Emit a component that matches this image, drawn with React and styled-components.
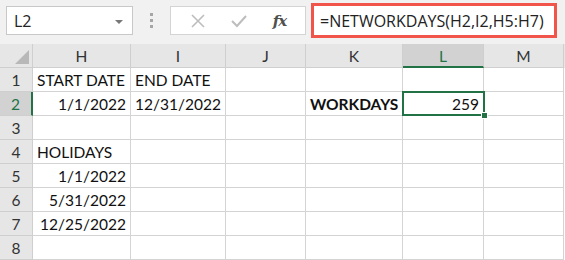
import React from 'react';
import styled, { createGlobalStyle } from 'styled-components';

const GlobalStyle = createGlobalStyle`
    html, body {
        margin: 0;
        padding: 0;
        background: #ffffff;
    }
`

const Page = styled.div`
    width: 565px;
    height: 260px;
    overflow: hidden;
    background: #ffffff;
    display: flex;
    flex-direction: column;
`

const FormulaBar = styled.div`
    height: 47px;
    padding-bottom: 3px;
    background: #f1f1f1;
    display: flex;
    align-items: center;
    padding-left: 6px;
`

const NameBox = styled.div`
    width: 127px;
    height: 29px;
    box-sizing: border-box;
    background: #ffffff;
    border: 1px solid #c8c8c8;
    display: flex;
    align-items: center;
    justify-content: space-between;
    padding: 0 9px 0 7px;
    font-family: "Open Sans", sans-serif;
    font-size: 16px;
    color: #222;
`

const DropArrow = styled.span`
    width: 0;
    height: 0;
    border-left: 4px solid transparent;
    border-right: 4px solid transparent;
    border-top: 4px solid #777;
    margin-top: 2px;
`

const Dots = styled.div`
    width: 37px;
    display: flex;
    flex-direction: column;
    align-items: center;
    gap: 3px;

    span {
        width: 3px;
        height: 3px;
        background: #a6a6a6;
    }
`

const ButtonBox = styled.div`
    width: 136px;
    height: 29px;
    box-sizing: border-box;
    background: #ffffff;
    border: 1px solid #d4d4d4;
    display: flex;
    align-items: center;
    justify-content: space-around;
    padding: 0 6px;
`

const Fx = styled.span`
    font-family: "DejaVu Serif", "Liberation Serif", serif;
    font-style: italic;
    font-size: 15px;
    font-weight: bold;
    color: #505050;
    letter-spacing: -1px;
`

const FormulaBox = styled.div`
    margin-left: 5px;
    width: 246px;
    height: 35px;
    box-sizing: border-box;
    background: #ffffff;
    border: 3px solid #f0544a;
    display: flex;
    align-items: center;
    padding-left: 6px;
    font-family: "Open Sans", sans-serif;
    font-size: 16px;
    color: #222;
    white-space: nowrap;
`

const Grid = styled.div`
    display: grid;
    grid-template-columns: 33px 98px 95px 80px 97px 81px 80px 1px;
    grid-auto-rows: 24px;
    font-family: Lato, "Liberation Sans", sans-serif;
    font-size: 15.5px;
    color: #111;
`

const Corner = styled.div`
    background: #e6e6e6;
    border-right: 1px solid #cfcfcf;
    border-bottom: 1px solid #cfcfcf;
    box-sizing: border-box;
    display: flex;
    align-items: flex-end;
    justify-content: flex-end;
    padding: 0 3px 3px 0;
`

const ColHead = styled.div`
    box-sizing: border-box;
    background: ${p => p.active ? '#d2d2d2' : '#e6e6e6'};
    color: ${p => p.active ? '#217346' : '#333'};
    border-right: 1px solid #cfcfcf;
    border-bottom: ${p => p.active ? '2px solid #217346' : '1px solid #cfcfcf'};
    display: flex;
    align-items: center;
    justify-content: center;
    padding-top: ${p => p.active ? '1px' : '0'};
`

const RowHead = styled.div`
    box-sizing: border-box;
    background: ${p => p.active ? '#d2d2d2' : '#e6e6e6'};
    color: ${p => p.active ? '#217346' : '#333'};
    border-right: ${p => p.active ? '2px solid #217346' : '1px solid #cfcfcf'};
    border-bottom: 1px solid #cfcfcf;
    display: flex;
    align-items: center;
    justify-content: center;
`

const Cell = styled.div`
    position: relative;
    box-sizing: border-box;
    border-right: 1px solid #d4d4d4;
    border-bottom: 1px solid #d4d4d4;
    display: flex;
    align-items: center;
    justify-content: ${p => p.right ? 'flex-end' : 'flex-start'};
    padding: 0 4px;
    font-weight: ${p => p.bold ? 'bold' : 'normal'};
    white-space: nowrap;
    overflow: visible;

    ${p => p.selected && `
        &:after {
            content: '';
            position: absolute;
            left: -1px;
            top: -1px;
            right: -2px;
            bottom: -1px;
            border: 2px solid #217346;
            pointer-events: none;
        }
        &:before {
            content: '';
            position: absolute;
            right: -5px;
            bottom: -4px;
            width: 5px;
            height: 5px;
            background: #217346;
            border: 1px solid #fff;
            z-index: 2;
        }
    `}
`

const Edge = styled.div`
    background: ${p => p.head ? '#e6e6e6' : '#ffffff'};
`

const cols = ['H', 'I', 'J', 'K', 'L', 'M']

const data = {
    1: { H: { v: 'START DATE' }, I: { v: 'END DATE' } },
    2: { H: { v: '1/1/2022', r: true }, I: { v: '12/31/2022', r: true }, K: { v: 'WORKDAYS', b: true }, L: { v: '259', r: true } },
    4: { H: { v: 'HOLIDAYS' } },
    5: { H: { v: '1/1/2022', r: true } },
    6: { H: { v: '5/31/2022', r: true } },
    7: { H: { v: '12/25/2022', r: true } },
}

const rows = [1, 2, 3, 4, 5, 6, 7, 8]

const App = () => {
    return (
        <Page>
            <GlobalStyle />
            <FormulaBar>
                <NameBox>L2<DropArrow /></NameBox>
                <Dots><span /><span /><span /></Dots>
                <ButtonBox>
                    <svg width="16" height="16" viewBox="0 0 16 16">
                        <path d="M2 2 L14 14 M14 2 L2 14" stroke="#bdbdbd" strokeWidth="1.6" fill="none" />
                    </svg>
                    <svg width="16" height="14" viewBox="0 0 16 14">
                        <path d="M1 7 L6 12 L15 2" stroke="#bdbdbd" strokeWidth="2" fill="none" />
                    </svg>
                    <Fx>fx</Fx>
                </ButtonBox>
                <FormulaBox>=NETWORKDAYS(H2,I2,H5:H7)</FormulaBox>
            </FormulaBar>
            <Grid>
                <Corner>
                    <svg width="14" height="14" viewBox="0 0 14 14">
                        <path d="M14 0 L14 14 L0 14 Z" fill="#b8b8b8" />
                    </svg>
                </Corner>
                {cols.map(c => <ColHead key={c} active={c === 'L'}>{c}</ColHead>)}
                <Edge head />
                {rows.map(r => (
                    <React.Fragment key={r}>
                        <RowHead active={r === 2}>{r}</RowHead>
                        {cols.map(c => {
                            const cell = (data[r] || {})[c]
                            return (
                                <Cell key={c} right={cell && cell.r} bold={cell && cell.b} selected={r === 2 && c === 'L'}>
                                    {cell ? cell.v : ''}
                                </Cell>
                            )
                        })}
                        <Edge />
                    </React.Fragment>
                ))}
            </Grid>
        </Page>
    );
}

export default App;
